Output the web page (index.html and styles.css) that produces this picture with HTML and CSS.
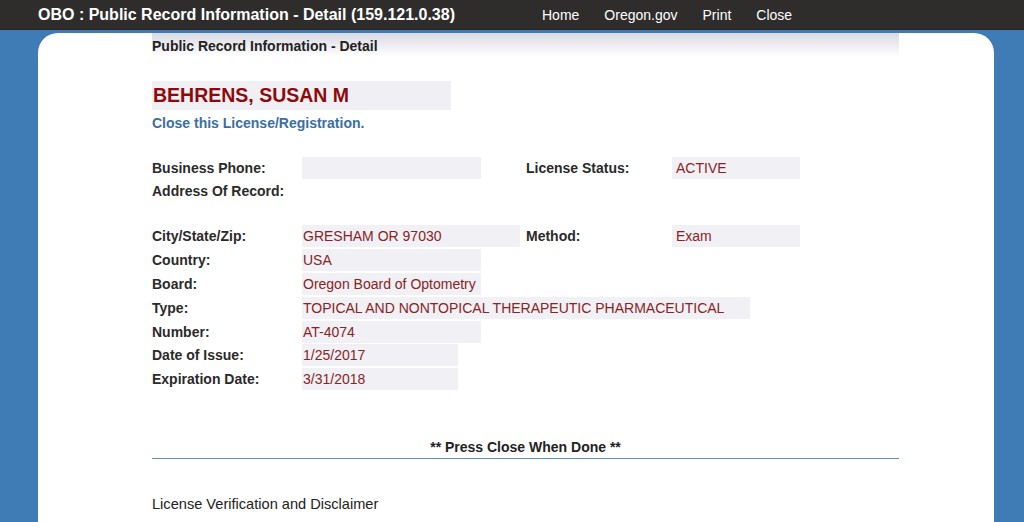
FILE: index.html
```html
<!DOCTYPE html>
<html>
<head>
<meta charset="utf-8">
<title>OBO : Public Record Information - Detail</title>
<link rel="stylesheet" href="styles.css">
</head>
<body>
<div class="topbar">
  <div class="title">OBO : Public Record Information - Detail (159.121.0.38)</div>
  <nav class="nav">
    <a href="#">Home</a>
    <a href="#">Oregon.gov</a>
    <a href="#">Print</a>
    <a href="#">Close</a>
  </nav>
</div>
<div class="stage">
  <div class="card">
    <div class="content">
      <div class="pagehead">Public Record Information - Detail</div>
      <div class="namebox">BEHRENS, SUSAN M</div>
      <a class="closelink" href="#">Close this License/Registration.</a>

      <div class="grid top">
        <div class="lbl">Business Phone:</div>
        <div class="cell"><span class="val w-m"></span></div>
        <div class="lbl">License Status:</div>
        <div class="cell"><span class="val w-st">ACTIVE</span></div>
        <div class="lbl">Address Of Record:</div>
        <div class="cell"></div>
        <div class="cell"></div>
        <div class="cell"></div>
      </div>

      <div class="grid main">
        <div class="lbl">City/State/Zip:</div>
        <div class="cell"><span class="val w-l">GRESHAM OR 97030</span></div>
        <div class="lbl">Method:</div>
        <div class="cell"><span class="val w-st">Exam</span></div>
        <div class="lbl">Country:</div>
        <div class="cell span3"><span class="val w-m">USA</span></div>
        <div class="lbl">Board:</div>
        <div class="cell span3"><span class="val w-m">Oregon Board of Optometry</span></div>
        <div class="lbl">Type:</div>
        <div class="cell span3"><span class="val w-xl">TOPICAL AND NONTOPICAL THERAPEUTIC PHARMACEUTICAL</span></div>
        <div class="lbl">Number:</div>
        <div class="cell span3"><span class="val w-m">AT-4074</span></div>
        <div class="lbl">Date of Issue:</div>
        <div class="cell span3"><span class="val w-s">1/25/2017</span></div>
        <div class="lbl">Expiration Date:</div>
        <div class="cell span3"><span class="val w-s">3/31/2018</span></div>
      </div>

      <div class="done">** Press Close When Done **</div>
      <div class="disclaimer">License Verification and Disclaimer</div>
    </div>
  </div>
</div>
</body>
</html>
```

FILE: styles.css
```css
* { box-sizing: border-box; }
html, body { margin: 0; padding: 0; }
body {
  background: #3f7cb6;
  font-family: "Liberation Sans", Arial, sans-serif;
  color: #222;
  height: 522px;
  overflow: hidden;
}
a { text-decoration: none; }

.topbar {
  height: 30px;
  background: #2e2d2c;
  display: flex;
  align-items: center;
  padding-left: 38px;
  color: #fff;
  border-bottom: 1px solid #262524;
}
.title {
  font-weight: bold;
  font-size: 16px;
  width: 504px;
  white-space: nowrap;
}
.nav { display: flex; gap: 0; font-size: 14px; }
.nav a { color: #fff; margin-right: 25px; }
.nav a:last-child { margin-right: 0; }

.stage {
  padding: 3px 30px 0 38px;
}
.card {
  background: #fff;
  border-radius: 20px 20px 0 0;
  height: 500px;
  padding: 0 95px 0 114px;
}
.pagehead {
  height: 24px;
  background: linear-gradient(#d9d9e2, #f4f4f7 70%, #ffffff);
  font-weight: bold;
  font-size: 14px;
  line-height: 27px;
  color: #222;
}
.namebox {
  margin-top: 24px;
  width: 299px;
  height: 29px;
  background: #efeff4;
  color: #8e0a0a;
  font-weight: bold;
  font-size: 19.5px;
  line-height: 29px;
  padding-left: 1px;
}
.closelink {
  display: block;
  margin-top: 5px;
  color: #3a6ea6;
  font-weight: bold;
  font-size: 14px;
  line-height: 16px;
}

.grid {
  display: grid;
  grid-template-columns: 150px 224px 146px 1fr;
  grid-auto-rows: 22px;
  font-size: 14px;
}
.grid.top { margin-top: 26px; row-gap: 1px; }
.grid.main { margin-top: 23px; row-gap: 1.9px; }
.lbl {
  font-weight: bold;
  color: #2a2a2a;
  line-height: 22px;
  white-space: nowrap;
}
.cell { display: flex; }
.span3 { grid-column: span 3; }
.val {
  display: block;
  height: 22px;
  line-height: 22px;
  background: #f0f0f5;
  color: #8a2424;
  font-size: 14px;
  padding-left: 1px;
  white-space: nowrap;
}
.w-s { width: 156px; }
.w-m { width: 179px; }
.w-l { width: 218px; }
.w-xl { width: 448px; }
.w-st { width: 128px; padding-left: 4px; }

.done {
  margin-top: 49px;
  text-align: center;
  font-weight: bold;
  font-size: 14px;
  color: #222;
  padding-bottom: 2px;
  border-bottom: 1px solid #5f8cb8;
  line-height: 17px;
}
.disclaimer {
  margin-top: 37px;
  font-size: 14.6px;
  color: #222;
}
```
